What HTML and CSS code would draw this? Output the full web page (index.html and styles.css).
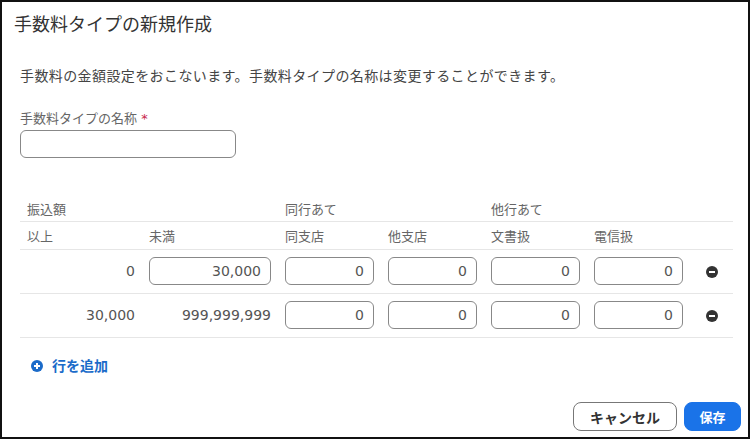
FILE: index.html
```html
<!DOCTYPE html>
<html lang="ja">
  <head>
    <meta charset="UTF-8" />
    <title>手数料タイプの新規作成</title>
    <link rel="stylesheet" href="styles.css">
  </head>
  <body>
    <div class="dialog">
      <h1 class="dialog-title">手数料タイプの新規作成</h1>

      <div class="dialog-body">
        <p class="lead">手数料の金額設定をおこないます。手数料タイプの名称は変更することができます。</p>

        <label class="field-label" for="typeName">手数料タイプの名称 <span class="required">*</span></label>
        <input type="text" id="typeName" class="name-input" />

        <table class="fee-table">
          <colgroup>
            <col style="width: 122px" />
            <col style="width: 136px" />
            <col style="width: 103px" />
            <col style="width: 103px" />
            <col style="width: 103px" />
            <col style="width: 103px" />
            <col style="width: 43px" />
          </colgroup>
          <thead>
            <tr class="group-row">
              <th colspan="2">振込額</th>
              <th colspan="2">同行あて</th>
              <th colspan="2">他行あて</th>
              <th></th>
            </tr>
            <tr class="col-row">
              <th>以上</th>
              <th>未満</th>
              <th>同支店</th>
              <th>他支店</th>
              <th>文書扱</th>
              <th>電信扱</th>
              <th></th>
            </tr>
          </thead>
          <tbody>
            <tr>
              <td class="num">0</td>
              <td><input class="num-input" type="text" value="30,000" /></td>
              <td><input class="num-input" type="text" value="0" /></td>
              <td><input class="num-input" type="text" value="0" /></td>
              <td><input class="num-input" type="text" value="0" /></td>
              <td><input class="num-input" type="text" value="0" /></td>
              <td class="remove-cell"><span class="remove-btn"></span></td>
            </tr>
            <tr>
              <td class="num">30,000</td>
              <td class="num">999,999,999</td>
              <td><input class="num-input" type="text" value="0" /></td>
              <td><input class="num-input" type="text" value="0" /></td>
              <td><input class="num-input" type="text" value="0" /></td>
              <td><input class="num-input" type="text" value="0" /></td>
              <td class="remove-cell"><span class="remove-btn"></span></td>
            </tr>
          </tbody>
        </table>

        <div class="add-row">
          <span class="add-icon"></span>
          <span>行を追加</span>
        </div>
      </div>

      <div class="dialog-footer">
        <button class="btn btn-cancel">キャンセル</button>
        <button class="btn btn-save">保存</button>
      </div>
    </div>
  </body>
</html>
```

FILE: styles.css
```css
* {
  box-sizing: border-box;
}

body {
  margin: 0;
  background-color: white;
  font-family: "DejaVu Sans", "Noto Sans CJK JP", sans-serif;
  color: #444;
}

.dialog {
  width: 750px;
  height: 439px;
  border: 2px solid #111;
  display: flex;
  flex-direction: column;
}

.dialog-title {
  margin: 0;
  padding: 10px 12px 0;
  font-size: 18px;
  font-weight: normal;
  line-height: 26px;
  color: #333;
}

.dialog-body {
  padding: 0 13px 0 18px;
}

.lead {
  margin: 28px 0 0;
  font-size: 14px;
  letter-spacing: 0.4px;
  line-height: 20px;
  color: #444;
}

.field-label {
  display: block;
  margin-top: 24px;
  font-size: 13px;
  line-height: 18px;
  color: #666;
}

.required {
  color: #c8264a;
}

.name-input {
  display: block;
  margin-top: 2px;
  width: 216px;
  height: 28px;
  border: 1px solid #888;
  border-radius: 6px;
  background: white;
}

/* 金額テーブル */
.fee-table {
  margin-top: 38px;
  width: 713px;
  border-collapse: collapse;
  table-layout: fixed;
}

.fee-table th {
  padding: 0 7px;
  text-align: left;
  font-weight: normal;
  font-size: 13px;
  color: #666;
  border-bottom: 1px solid #e6e6e6;
}

.group-row th {
  height: 25px;
}

.col-row th {
  height: 28px;
}

.fee-table td {
  height: 44px;
  padding: 0 7px;
  border-bottom: 1px solid #e6e6e6;
  font-size: 14px;
  color: #555;
}

.fee-table td.num {
  text-align: right;
}

.num-input {
  display: block;
  width: 100%;
  height: 28px;
  padding: 0 9px;
  border: 1px solid #888;
  border-radius: 6px;
  text-align: right;
  font-family: "DejaVu Sans", sans-serif;
  font-size: 14px;
  color: #555;
  background: white;
}

.remove-cell {
  text-align: center;
}

.remove-btn {
  display: inline-block;
  position: relative;
  width: 12px;
  height: 12px;
  border-radius: 50%;
  background: #333;
  vertical-align: middle;
}

.remove-btn::after {
  content: "";
  position: absolute;
  left: 3px;
  top: 5px;
  width: 6px;
  height: 2px;
  background: white;
}

.add-row {
  display: flex;
  align-items: center;
  gap: 9px;
  margin-top: 18px;
  padding-left: 11px;
  font-size: 14px;
  font-weight: bold;
  line-height: 20px;
  color: #1b6bc9;
}

.add-icon {
  position: relative;
  width: 12px;
  height: 12px;
  border-radius: 50%;
  background: #1b6bc9;
}

.add-icon::before,
.add-icon::after {
  content: "";
  position: absolute;
  background: white;
}

.add-icon::before {
  left: 3px;
  top: 5px;
  width: 6px;
  height: 2px;
}

.add-icon::after {
  left: 5px;
  top: 3px;
  width: 2px;
  height: 6px;
}

.dialog-footer {
  margin-top: auto;
  display: flex;
  justify-content: flex-end;
  gap: 7px;
  padding: 0 7px 6px 0;
}

.btn {
  height: 29px;
  border-radius: 8px;
  font-family: "Noto Sans CJK JP", sans-serif;
  font-weight: bold;
  font-size: 14px;
  padding: 0;
}

.btn-cancel {
  width: 104px;
  border: 1px solid #777;
  background: white;
  color: #333;
}

.btn-save {
  width: 57px;
  border: 1px solid #1a73e8;
  background: #1a73e8;
  color: white;
  font-size: 13px;
}
```
